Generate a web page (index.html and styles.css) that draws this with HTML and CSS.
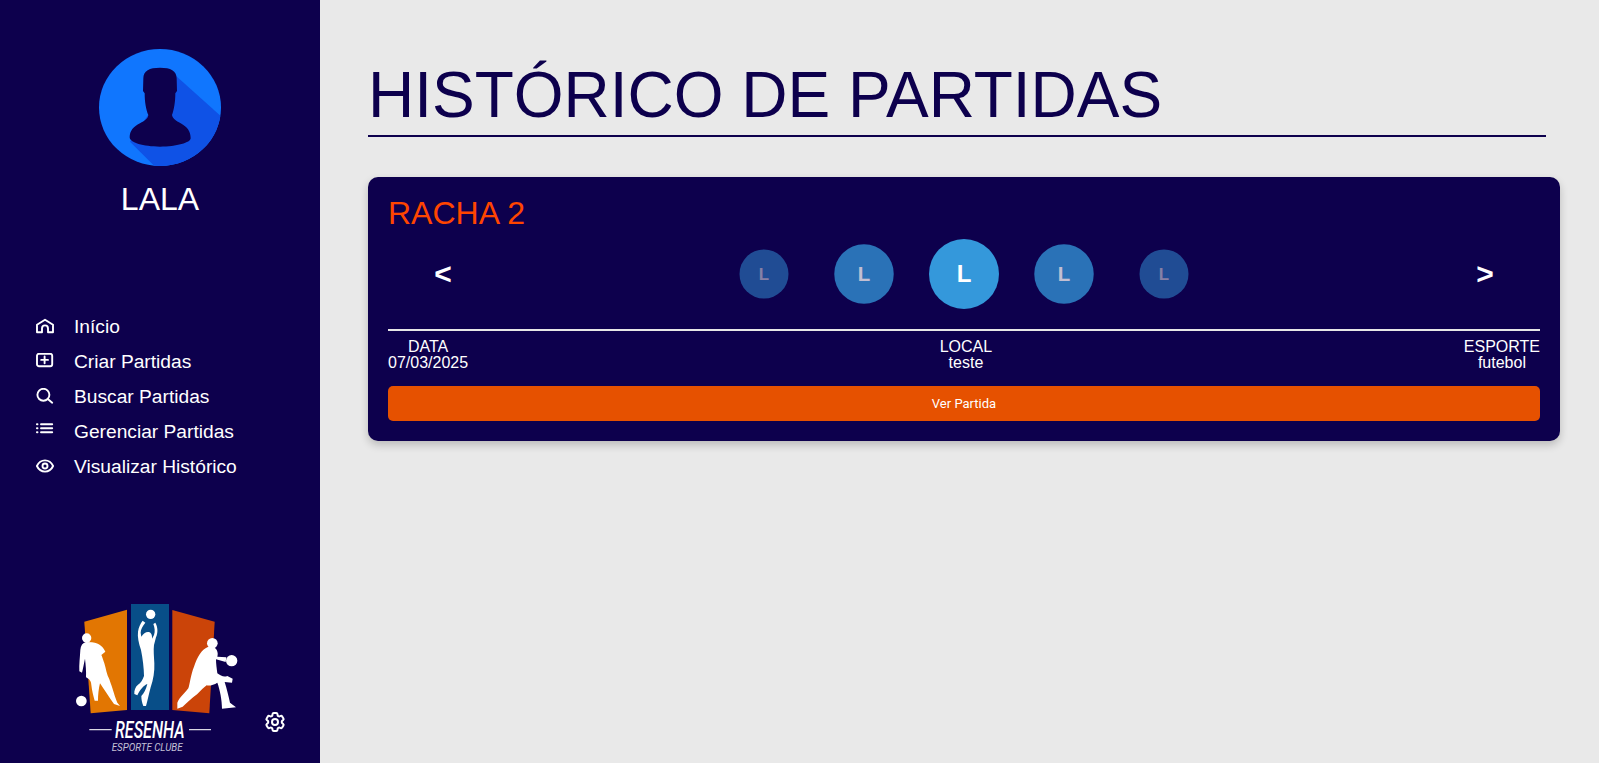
FILE: index.html
```html
<!DOCTYPE html>
<html lang="pt-BR">
<head>
<meta charset="utf-8">
<title>Histórico de Partidas</title>
<link rel="stylesheet" href="styles.css">
</head>
<body>
<div class="app">
  <aside class="sidebar">
    <div class="profile">
      <svg class="avatar" viewBox="0 0 122 117" aria-hidden="true">
        <defs><clipPath id="avatarClip"><ellipse cx="61" cy="58.5" rx="61" ry="58.5"/></clipPath></defs>
        <ellipse cx="61" cy="58.5" rx="61" ry="58.5" fill="#1076fe"/>
        <g clip-path="url(#avatarClip)">
          <g transform="translate(-39 -19) scale(.33333)">
            <polygon points="345,135 490,265 490,420 295,420 210,335" fill="#0f52e6"/>
            <path d="M250 145 C250 122 268 113 300 113 C332 113 350 122 350 145 L351 183 L346 190 C346 215 342 240 336 255 C338 266 348 272 362 280 C382 291 392 305 392 325 C392 338 350 350 300 350 C250 350 209 338 209 322 C209 303 220 290 240 280 C254 272 264 266 265 255 C258 240 254 215 254 190 L249 183 Z" fill="#0d004d"/>
          </g>
        </g>
      </svg>
      <h2 class="user-name">LALA</h2>
    </div>

    <nav class="nav">
      <a class="nav-item" href="#">
        <svg class="nav-icon" viewBox="0 0 18 18"><path d="M1 14.200V6.800L9 1.700l8 5.100v7.400h-5v-3.800a3 3 0 0 0-6 0v3.800z"/></svg>
        <span>Início</span>
      </a>
      <a class="nav-item" href="#">
        <svg class="nav-icon" viewBox="0 0 18 18"><rect x="1" y=".8" width="15.200" height="12.400" rx="2"/><path d="M8.600 3.500v6.800M5.200 6.900h6.800"/></svg>
        <span>Criar Partidas</span>
      </a>
      <a class="nav-item" href="#">
        <svg class="nav-icon" viewBox="0 0 18 18"><circle cx="7.400" cy="6.800" r="6"/><path d="M11.800 11.100l4.400 3.600"/></svg>
        <span>Buscar Partidas</span>
      </a>
      <a class="nav-item" href="#">
        <svg class="nav-icon" viewBox="0 0 18 18"><path d="M5 1.200h11.200M5 5.200h11.200M5 9.200h11.200M.9 1.200h.6M.9 5.200h.6M.9 9.200h.6"/></svg>
        <span>Gerenciar Partidas</span>
      </a>
      <a class="nav-item" href="#">
        <svg class="nav-icon" viewBox="0 0 18 18"><path d="M.9 8C2.800 4 5.800 2.400 9 2.400S15.200 4 17.100 8C15.200 12 12.200 13.600 9 13.600S2.800 12 .9 8z"/><circle cx="9" cy="8" r="2.500"/></svg>
        <span>Visualizar Histórico</span>
      </a>
    </nav>

    <div class="sidebar-footer">
      <svg class="logo" viewBox="72 600 172 160" role="img" aria-label="Resenha Esporte Clube">
        <polygon points="84.300,621.700 127,609.700 127,710 90.700,713.300" fill="#e27602"/>
        <rect x="131" y="604" width="38" height="106" fill="#084e88"/>
        <polygon points="172.300,610 214.700,621.700 209.300,713.300 172.300,710" fill="#cb4409"/>
        <g transform="translate(72 600) scale(.33333)" fill="#fff">
          <circle cx="44" cy="114" r="14"/>
          <circle cx="28" cy="303" r="16"/>
          <path d="M42 126 C32 128 26 136 25 150 C24 170 21 195 22 214 L30 218 C33 205 36 190 39 176 C41 195 43 215 42 232 C50 236 58 242 58 255 C60 272 64 288 68 302 L78 302 C78 285 80 265 84 250 C96 268 110 290 126 312 L144 318 L136 308 C128 290 122 265 116 250 L112 238 C104 225 102 205 97 190 C92 175 90 168 88 165 L100 155 C94 142 84 130 60 127 Z"/>
          <circle cx="236" cy="43" r="14"/>
          <path d="M212 62 L220 68 C212 78 206 88 206 98 L208 110 C214 100 222 95 230 96 C238 97 241 106 240 116 L246 105 C250 95 248 82 244 72 L250 68 C258 82 258 98 252 112 L246 135 C244 150 246 170 247 190 C248 215 244 240 236 262 C230 285 226 305 222 318 L214 318 C210 308 208 298 208 288 C216 280 222 268 226 252 C216 256 204 268 196 286 L187 282 C186 272 190 260 198 254 C206 250 212 240 216 228 C216 205 212 175 207 150 C200 130 196 110 198 95 C200 82 205 70 212 62 Z"/>
        </g>
        <g transform="translate(160 600) scale(.33333)" fill="#fff">
          <circle cx="157" cy="130" r="16"/>
          <circle cx="215" cy="182" r="17"/>
          <path d="M145 140 C125 148 112 170 102 200 C92 225 90 250 85 265 C75 280 58 292 52 308 L52 326 L68 320 C78 310 95 295 112 282 C122 272 132 262 140 256 C150 258 162 254 172 248 C180 270 186 300 186 326 L228 322 L210 308 C206 290 200 265 194 246 L216 248 L218 236 L202 228 C192 232 182 228 172 220 C170 205 168 190 168 178 L197 186 L199 172 L172 170 C176 158 170 145 160 142 Z"/>
        </g>
        <path class="logo-rule" d="M89.300 729.700h22.400M189 729.700h22"/>
        <text class="logo-title" x="115" y="738" textLength="69.500" lengthAdjust="spacingAndGlyphs">RESENHA</text>
        <text class="logo-sub" x="111.700" y="751" textLength="71" lengthAdjust="spacingAndGlyphs">ESPORTE CLUBE</text>
      </svg>
      <svg class="gear" viewBox="0 0 24 24" aria-label="Configurações">
        <path d="M9.594 3.940c.09-.542.56-.94 1.110-.94h2.593c.55 0 1.020.398 1.110.94l.213 1.281c.063.374.313.686.645.870.074.04.147.083.22.127.325.196.72.257 1.075.124l1.217-.456a1.125 1.125 0 0 1 1.370.49l1.296 2.247a1.125 1.125 0 0 1-.26 1.431l-1.003.827c-.293.241-.438.613-.43.992a7.723 7.723 0 0 1 0 .255c-.008.378.137.75.43.991l1.004.827c.424.35.534.955.26 1.43l-1.298 2.247a1.125 1.125 0 0 1-1.369.491l-1.217-.456c-.355-.133-.75-.072-1.076.124a6.470 6.470 0 0 1-.22.128c-.331.183-.581.495-.644.869l-.213 1.281c-.09.543-.56.94-1.110.94h-2.594c-.55 0-1.019-.398-1.110-.94l-.213-1.281c-.062-.374-.312-.686-.644-.87a6.520 6.520 0 0 1-.22-.127c-.325-.196-.72-.257-1.076-.124l-1.217.456a1.125 1.125 0 0 1-1.369-.49l-1.297-2.247a1.125 1.125 0 0 1 .26-1.431l1.004-.827c.292-.24.437-.613.43-.991a6.932 6.932 0 0 1 0-.255c.007-.38-.138-.751-.43-.992l-1.004-.827a1.125 1.125 0 0 1-.26-1.430l1.297-2.247a1.125 1.125 0 0 1 1.370-.491l1.216.456c.356.133.751.072 1.076-.124.072-.044.146-.086.22-.128.332-.183.582-.495.644-.869l.214-1.280Z"/>
        <path d="M15 12a3 3 0 1 1-6 0 3 3 0 0 1 6 0Z"/>
      </svg>
    </div>
  </aside>

  <main class="main">
    <h1 class="page-title">HISTÓRICO DE PARTIDAS</h1>
    <section class="card">
      <h3 class="card-title">RACHA 2</h3>
      <div class="carousel">
        <button class="arrow">&lt;</button>
        <div class="track">
          <div class="player player-far">L</div>
          <div class="player player-near">L</div>
          <div class="player">L</div>
          <div class="player player-near">L</div>
          <div class="player player-far">L</div>
        </div>
        <button class="arrow">&gt;</button>
      </div>
      <div class="info">
        <div class="info-col"><div>DATA</div><div>07/03/2025</div></div>
        <div class="info-col"><div>LOCAL</div><div>teste</div></div>
        <div class="info-col"><div>ESPORTE</div><div>futebol</div></div>
      </div>
      <button class="see-btn">Ver Partida</button>
    </section>
  </main>
</div>
</body>
</html>
```
FILE: styles.css
```css
* { box-sizing: border-box; }

html, body {
  margin: 0;
  height: 100%;
  overflow: hidden;
}

body {
  background: #e9e9e9;
  font-family: "Liberation Sans", Arial, sans-serif;
}

.app {
  display: flex;
  height: 763px;
}

/* Sidebar */
.sidebar {
  flex: 0 0 320px;
  display: flex;
  flex-direction: column;
  background: #0d004d;
  color: #fff;
}

.profile {
  display: flex;
  flex-direction: column;
  align-items: center;
  padding-top: 49px;
}

.avatar {
  display: block;
  width: 122px;
  height: 117px;
}

.user-name {
  margin: 15px 0 0;
  font-size: 32px;
  font-weight: 400;
  line-height: 37px;
}

.nav {
  display: flex;
  flex-direction: column;
  margin-top: 91px;
  padding-left: 36px;
}

.nav-item {
  display: flex;
  align-items: center;
  gap: 20px;
  height: 35.2px;
  color: #fff;
  font-size: 19.2px;
  text-decoration: none;
}

.nav-icon {
  flex: none;
  width: 18px;
  height: 18px;
  fill: none;
  stroke: #fff;
  stroke-width: 1.9;
  stroke-linecap: round;
  stroke-linejoin: round;
}

.sidebar-footer {
  display: flex;
  align-items: flex-end;
  margin-top: auto;
  padding: 0 0 3px 72px;
}

.logo {
  display: block;
  flex: none;
  width: 172px;
  height: 160px;
}

.logo-rule {
  fill: none;
  stroke: #d9d7e4;
  stroke-width: 1.2;
}

.logo-title {
  fill: #fff;
  font-family: Roboto, sans-serif;
  font-size: 24px;
  font-style: italic;
  font-weight: 500;
}

.logo-sub {
  fill: #c4c1d6;
  font-family: Roboto, sans-serif;
  font-size: 10.5px;
  font-style: italic;
  font-weight: 400;
}

.gear {
  flex: none;
  width: 24px;
  height: 24px;
  margin: 0 0 26px 19px;
  fill: none;
  stroke: #fff;
  stroke-width: 2;
  stroke-linecap: round;
  stroke-linejoin: round;
}

/* Main */
.main {
  flex: 1;
  min-width: 0;
  padding: 0 39px 0 48px;
}

.page-title {
  margin: 0 14px 40px 0;
  padding-top: 59px;
  padding-bottom: 4px;
  border-bottom: 2px solid #0d004d;
  color: #0d004d;
  font-size: 64px;
  font-weight: 400;
  line-height: 72px;
}

.card {
  display: flex;
  flex-direction: column;
  padding: 18px 20px 20px;
  border-radius: 10px;
  background: #0d004d;
  color: #fff;
  box-shadow: 0 4px 8px rgba(0, 0, 0, 0.2);
}

.card-title {
  margin: 0;
  color: #ff4500;
  font-size: 32px;
  font-weight: 400;
  line-height: 37px;
}

.carousel {
  display: flex;
  align-items: center;
  justify-content: space-between;
  height: 70px;
  margin-top: 7px;
}

.arrow {
  flex: none;
  width: 110px;
  padding: 0;
  border: 0;
  background: none;
  color: #fff;
  font-family: inherit;
  font-size: 30px;
  font-weight: 700;
}

.track {
  display: flex;
  gap: 30px;
}

.player {
  display: flex;
  align-items: center;
  justify-content: center;
  width: 70px;
  height: 70px;
  border-radius: 50%;
  background: #3498db;
  color: #fff;
  font-size: 24px;
  font-weight: 700;
}

.player-near {
  opacity: 0.75;
  transform: scale(0.85);
}

.player-far {
  opacity: 0.5;
  transform: scale(0.7);
}

.info {
  display: flex;
  justify-content: space-between;
  margin-top: 20px;
  padding-top: 8px;
  border-top: 2px solid #e6e6e6;
  font-size: 16px;
  line-height: 16px;
}

.info-col {
  text-align: center;
}

.see-btn {
  height: 35px;
  margin-top: 15px;
  padding: 0;
  border: 0;
  border-radius: 5px;
  background: #e65100;
  color: #fff;
  font-family: Roboto, sans-serif;
  font-size: 13px;
  font-weight: 400;
}
```
